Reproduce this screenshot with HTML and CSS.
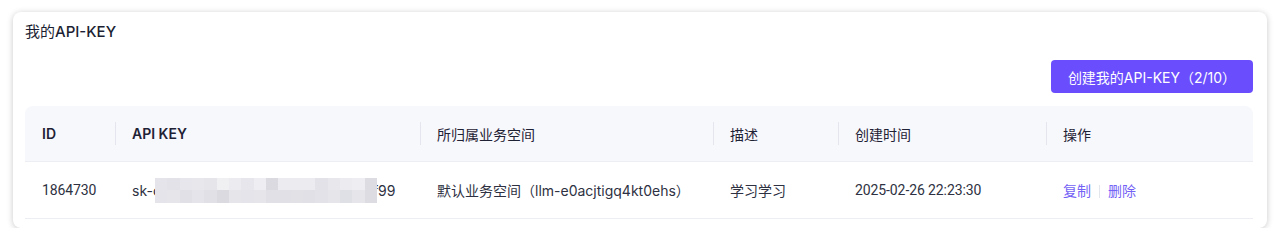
FILE: index.html
```html
<!DOCTYPE html>
<html lang="zh-CN">
<head>
    <meta charset="UTF-8">
    <meta name="viewport" content="width=device-width, initial-scale=1.0">
    <title>我的API-KEY</title>
    <link rel="stylesheet" href="styles.css">
</head>
<body>
    <div class="card">
        <div class="card-title">我的<span class="en">API-KEY</span></div>
        <div class="toolbar">
            <button class="btn-primary">创建我的API-KEY（2/10）</button>
        </div>
        <table class="key-table">
            <colgroup>
                <col style="width: 90px">
                <col style="width: 305px">
                <col style="width: 293px">
                <col style="width: 125px">
                <col style="width: 208px">
                <col>
            </colgroup>
            <thead>
                <tr>
                    <th class="en">ID</th>
                    <th class="en">API KEY</th>
                    <th>所归属业务空间</th>
                    <th>描述</th>
                    <th>创建时间</th>
                    <th>操作</th>
                </tr>
            </thead>
            <tbody>
                <tr>
                    <td class="num">1864730</td>
                    <td>
                        <span class="key">sk-c<span class="mask">
                            <i style="background:#e4e4ea"></i><i style="background:#e2e2e8"></i><i style="background:#e6e6ec"></i><i style="background:#e8e8ec"></i><i style="background:#e6e6ea"></i><i style="background:#f0f0f2"></i><i style="background:#ececf0"></i><i style="background:#e6e6ec"></i><i style="background:#eeeef2"></i><i style="background:#dadae0"></i><i style="background:#ececf0"></i><i style="background:#ececf0"></i><i style="background:#ececf0"></i><i style="background:#e2e2e8"></i><i style="background:#e8e8ec"></i><i style="background:#ececf0"></i><i style="background:#eeeef2"></i><i style="background:#dcdce2"></i>
                            <i style="background:#e4e4ea"></i><i style="background:#e6e6ea"></i><i style="background:#e0e0e6"></i><i style="background:#e4e4ea"></i><i style="background:#e0e0e6"></i><i style="background:#dadae0"></i><i style="background:#e6e6ea"></i><i style="background:#e4e4ea"></i><i style="background:#e6e6ea"></i><i style="background:#e0e0e6"></i><i style="background:#e0e0e6"></i><i style="background:#e2e2e6"></i><i style="background:#e0e0e6"></i><i style="background:#e2e2e8"></i><i style="background:#e6e6ea"></i><i style="background:#dee0e6"></i><i style="background:#e6e6ea"></i><i style="background:#dcdce2"></i>
                        </span>f99</span>
                    </td>
                    <td>默认业务空间（llm-e0acjtigq4kt0ehs）</td>
                    <td>学习学习</td>
                    <td class="num">2025-02-26 22:23:30</td>
                    <td class="actions">
                        <a href="#">复制</a><span class="divider"></span><a href="#">删除</a>
                    </td>
                </tr>
            </tbody>
        </table>
    </div>
</body>
</html>
```

FILE: styles.css
```css
*{
    margin: 0;
    padding: 0;
    box-sizing: border-box;
}
body{
    background: #ffffff;
    font-family: Inter, "Noto Sans CJK SC", sans-serif;
    font-size: 14px;
    color: #2c2f40;
}
.card{
    margin: 12px 13px 0;
    height: 216px;
    padding: 9px 14px 10px 12px;
    background: #ffffff;
    border-radius: 8px;
    box-shadow: 0 1px 6px rgba(0, 0, 0, 0.22);
}
.card-title{
    font-size: 15px;
    line-height: 22px;
    color: #1c1f33;
}
.en{
    font-weight: 500;
}
.toolbar{
    display: flex;
    justify-content: flex-end;
    margin-top: 17px;
    margin-bottom: 13px;
}
.btn-primary{
    height: 33px;
    width: 202px;
    border: none;
    border-radius: 4px;
    background: #6a4efd;
    color: #ffffff;
    font-family: inherit;
    font-size: 14px;
    cursor: pointer;
}
.key-table{
    width: 100%;
    table-layout: fixed;
    border-collapse: separate;
    border-spacing: 0;
}
.key-table th{
    position: relative;
    height: 56px;
    padding: 0 17px;
    text-align: left;
    font-weight: 400;
    color: #1f2235;
    background: #f7f8fc;
    border-bottom: 1px solid #eceef4;
}
.key-table th.en{
    font-weight: 600;
}
.key-table th:first-child{
    border-top-left-radius: 8px;
}
.key-table th:last-child{
    border-top-right-radius: 8px;
}
.key-table th + th::before{
    content: "";
    position: absolute;
    left: 0;
    top: 16px;
    height: 23px;
    width: 1px;
    background: #e4e6ee;
}
.key-table td{
    height: 57px;
    padding: 0 17px;
    color: #2e3142;
    border-bottom: 1px solid #eceef4;
    white-space: nowrap;
}
.key-table td.num{
    font-family: Roboto, sans-serif;
    font-size: 14px;
    letter-spacing: -0.1px;
}
.key{
    display: inline-flex;
    align-items: center;
}
.mask{
    position: relative;
    z-index: 1;
    display: inline-grid;
    grid-template-columns: repeat(18, 1fr);
    width: 222px;
    height: 25px;
    margin: 0 -4px 0 -6px;
}
.mask i{
    display: block;
}
.actions a{
    color: #7362f5;
    text-decoration: none;
}
.divider{
    display: inline-block;
    width: 1px;
    height: 13px;
    margin: 0 8px;
    vertical-align: -2px;
    background: #e4e6ee;
}
```
